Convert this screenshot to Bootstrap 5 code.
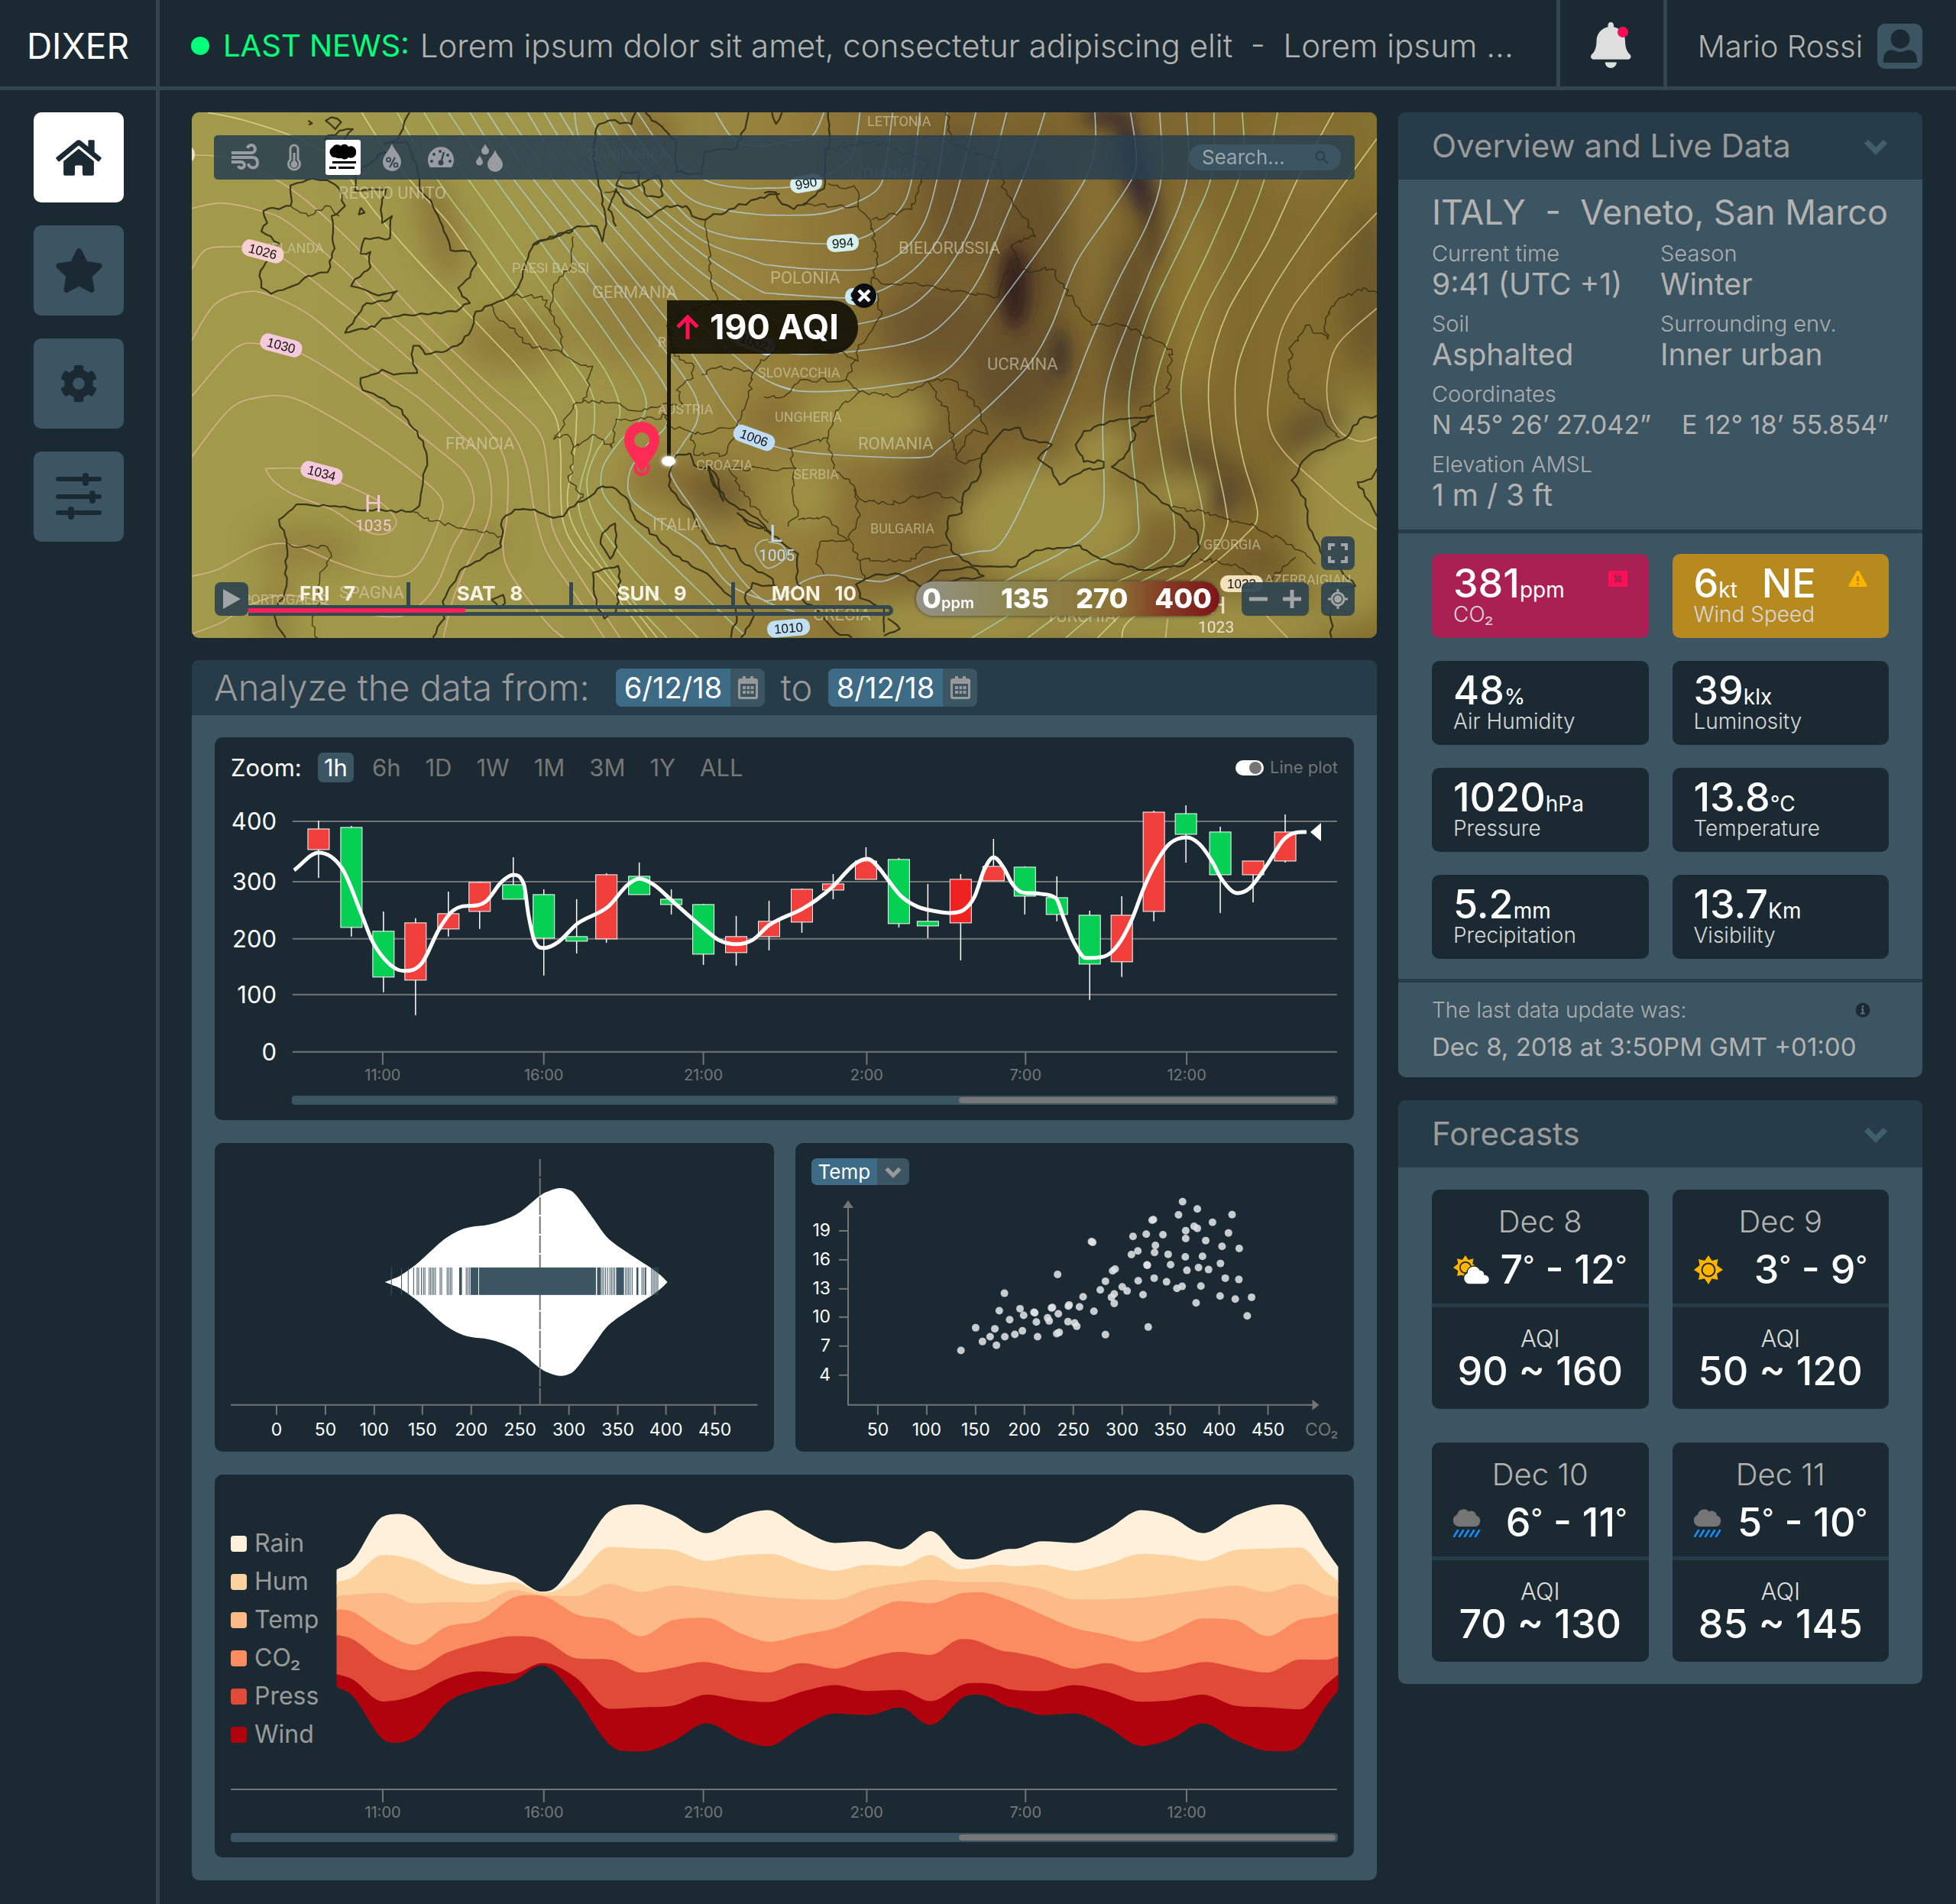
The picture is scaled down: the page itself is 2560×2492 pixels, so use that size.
<!DOCTYPE html>
<html lang="en">
<head>
<meta charset="utf-8">
<meta name="viewport" content="width=device-width, initial-scale=1">
<title>Dixer – Air quality dashboard</title>
<link href="https://cdn.jsdelivr.net/npm/bootstrap@5.3.0/dist/css/bootstrap.min.css" rel="stylesheet">
<style>
:root{--ink:#1b2a32;--panel:#3b5563;--head:#273c49;--line:#33454f;--blue:#3d6b86;--grey:#9a9a9a;--soft:#b4b2b0;--dim:#747474}
body{background:var(--ink);color:#fff;font-family:Inter,"Open Sans",sans-serif;font-size:28px;line-height:34px}
button,input,select{font-family:inherit}
a{text-decoration:none;color:inherit}
svg{display:block;overflow:visible}
/* top bar */
.topbar{height:118px;border-bottom:5px solid var(--line)}
.topbar>*{padding-top:6px}
.brand-cell{width:209px;border-right:5px solid var(--line);font-size:46px}
.news{padding-left:41px;font-size:42px;font-weight:300;color:var(--soft);min-width:0}
.news b{font-weight:400;font-size:40px;color:#05ff7b;margin:0 14px 0 18px}
.live-dot{width:24px;height:24px;border-radius:50%;background:#05ff7b;flex:none}
.bell-cell{width:145px;border:0 solid var(--line);border-width:0 5px;flex:none}
.user-cell{padding:0 44px 0 40px;font-size:40px;font-weight:300;color:var(--soft);flex:none;gap:19px}
.avatar{width:59px;height:59px;border-radius:10px;background:var(--panel)}
/* side bar */
.sidebar{width:209px;border-right:5px solid var(--line);padding:29px 0 0 44px;gap:30px;flex:none}
.side-btn{width:118px;height:118px;border-radius:10px;background:var(--panel);color:var(--ink)}
.side-btn.active{background:#fff}
main{padding:29px 44px 29px 42px;gap:28px;min-width:0}
.col-data{flex:1551 1 0;min-width:0;gap:29px}
.col-live{flex:686 1 0;min-width:0;gap:30px}
/* panels */
.panel{background:var(--panel);border-radius:10px;overflow:hidden}
.panel-head{background:var(--head);color:var(--grey);padding:0 44px;height:88px;font-size:42px;line-height:88px}
.panel-head h2{font-size:inherit;line-height:inherit;font-weight:400;margin:0}
.chev{color:#3f5f6f;border:0;background:none;padding:0}
.rule{height:5px;background:var(--head)}
.place{padding:18px 44px 22px}
.place h3{font-size:45px;line-height:50px;font-weight:400;margin:0;color:var(--soft);white-space:pre}
.fact{margin-top:12px}
.fact dt{font-size:29px;line-height:34px;font-weight:300;color:#aeaeae}
.fact dd{font-size:39px;line-height:46px;color:var(--soft);margin:0;white-space:nowrap}
.fact .geo{font-size:34px}
.tilebox{padding:27px 44px 26px}
.daybox{padding:29px 44px}
.tiles{--bs-gutter-x:31px;--bs-gutter-y:30px}
.tile{background:var(--ink);border-radius:10px;height:110px;padding:14px 28px 0}
.tile .val{font-size:52px;line-height:50px;font-weight:500}
.tile .unit{font-size:28px;line-height:20px;font-weight:400}
.tile .lbl{font-size:28px;line-height:30px;font-weight:300;color:#d8d8d8}
.tile.bad{background:#aa2052}
.tile.warn{background:#b78a20}
.updated{padding:19px 44px}
.updated .when{font-size:33px;line-height:42px;margin-top:10px;color:var(--soft);white-space:nowrap}
.days{--bs-gutter-x:31px;--bs-gutter-y:44px}
.day{background:var(--ink);border-radius:10px;text-align:center}
.day .date{font-size:40px;line-height:48px;font-weight:300;color:var(--soft);padding-top:18px}
.day .temps{font-size:52px;line-height:60px;font-weight:500;margin-top:9px;padding:0 28px 14px;white-space:nowrap}
.day .deg{font-weight:400;font-size:34px;line-height:20px;vertical-align:12px}
.day .aqi{font-size:31px;line-height:36px;font-weight:300;padding-top:23px;color:#dedede}
.day .range{font-size:52px;line-height:50px;font-weight:500;padding-bottom:24px}
/* map */
.mapbox{position:relative;aspect-ratio:1551/688;border-radius:10px;overflow:hidden;background:#9b9146}
.mapbox>svg{width:100%;height:100%}
.layers{position:absolute;left:29px;right:29px;top:30px;height:58px;border-radius:5px;background:rgba(41,64,80,.88);padding:0 18px;gap:18px}
.layer-btn{width:46px;height:46px;border:0;padding:0;border-radius:3px;background:none;color:#999da1}
.layer-btn.active{background:#fff;color:#000}
.finder{width:199px;height:34px;border-radius:17px;background:var(--panel)}
.finder input{width:150px;background:none;border:0;padding:0 0 0 17px;color:#a0a5a8;font-size:26px;line-height:34px;outline:0}
.finder input::placeholder{color:#a0a5a8;opacity:1}
.finder button{background:none;border:0;padding:0;color:#2b434f}
.mapbar{position:absolute;left:30px;right:29px;bottom:29px}
.map-btn{width:44px;height:44px;background:rgba(47,69,80,.93);border:0;border-radius:8px;padding:0;color:#a2a4a6}
.timeline{margin-right:30px}
.timeline .dayname{font-size:26px;line-height:30px;font-weight:700;color:#f5f2e6;border-right:5px solid #34494f;text-align:center;white-space:pre;flex:1 1 0}
.timeline .dayname:last-child{border-right:0}
.track{height:14px;border:5px solid #34494f;border-left:0;border-radius:0 7px 7px 0;background:none}
.track div{height:6px;margin-top:-1px;background:#f72057}
.scale{width:397px;height:45px;border-radius:23px;background:linear-gradient(90deg,#93928a,#8c8652 30%,#8b7434 65%,#843a24 82%,#7c1518);box-shadow:0 0 4px #333;padding:0 10px 0 8px;font-size:36px;line-height:45px;font-weight:800;margin-right:29px}
.scale small{font-size:20px;font-weight:600}
.flag{position:absolute;left:40.1%;top:35.8%;width:250px;height:70px;border-radius:0 34px 34px 0;background:rgba(20,17,7,.92);font-size:45px;font-weight:700;line-height:70px;padding-left:12px;gap:14px;white-space:nowrap}
.flag::before{content:"";position:absolute;left:0;top:70px;width:5px;height:139px;background:#1a170b}
.flag .spot{position:absolute;left:-7px;top:204px;width:18px;height:13px;border-radius:50%;background:#fff;box-shadow:0 0 5px #fff}
.flag button{position:absolute;right:-24px;top:-22px;width:32px;height:32px;border-radius:50%;background:#0b0d0e;border:0;padding:0}
/* analysis */
.ask{padding:0 29px;height:72px;background:var(--head);font-size:47px;font-weight:300;color:var(--grey)}
.ask-from{width:510px}
.ask-to{width:83px;text-align:center}
.datebox{width:195px;height:50px;border-radius:8px;overflow:hidden;background:var(--panel)}
.datebox input{width:150px;background:var(--blue);border:0;color:#fff;font-size:38px;line-height:50px;padding:0;text-align:center;outline:0}
.datebox button{flex:1;background:none;border:0;padding:0;color:#999}
.charts{padding:29px 30px 30px;gap:30px}
.plot{background:var(--ink);border-radius:10px;padding:20px 21px}
.zoomrow{height:39px;font-size:31px;line-height:39px}
.zoomrow .cap{width:98px}
.zoomrow button{background:none;border:0;border-radius:7px;color:#777;padding:0 8px;font-size:31px;line-height:39px}
.zoomrow button.active{background:var(--panel);color:#fff}
.switchbox{width:37px;height:20px;border-radius:10px;background:#fff;appearance:none;margin:0;position:relative}
.switchbox::after{content:"";position:absolute;right:3px;top:2px;width:16px;height:16px;border-radius:50%;background:#747474}
.plotlbl{font-size:22px;color:var(--dim)}
.scroller{height:12px;border-radius:4px;background:var(--panel);padding:2px 3px}
.scroller div{height:8px;border-radius:4px;background:#777;margin-left:auto}
.scroller.inset-y{margin-left:80px}
.pick{position:relative;width:128px;height:35px}
.pick select{width:128px;height:35px;border:0;border-radius:7px;appearance:none;color:#fff;font-size:26px;line-height:35px;padding:0 0 0 9px;background:linear-gradient(90deg,var(--blue) 86px,var(--panel) 86px)}
.pick svg{position:absolute;right:9px;top:10px;pointer-events:none}
.keys{width:138px;margin:0;padding:0;list-style:none;font-size:32px;line-height:50px;color:var(--grey);flex:none}
.keys span{display:inline-block;width:21px;height:21px;border-radius:4px;flex:none}
.keys li{gap:10px}
.bands{flex:1 1 0;min-width:0}
svg .ax{stroke:#747474;stroke-width:2;fill:none}
svg .n1{font-size:31px;fill:#fff;text-anchor:end}
svg .n2{font-size:20px;fill:#777;text-anchor:middle}
svg .n3{font-size:23px;fill:#fff;text-anchor:middle}
svg .n4{font-size:23px;fill:#fff;text-anchor:end}
svg .unitname{font-size:23px;fill:#747474;text-anchor:end}
#land text{font-family:Roboto,sans-serif;font-weight:400;fill:#d9d3b0;fill-opacity:.62}
#land .big{font-size:22px}#land .sml{font-size:18px}
#pills text{font-family:"Liberation Sans",sans-serif;font-size:17px;fill:#111;text-anchor:middle}
</style>
</head>
<body class="d-flex flex-column min-vh-100">

<svg width="0" height="0" class="position-absolute" aria-hidden="true">
  <symbol id="i-chev" viewBox="0 0 32 22"><path d="M4 5l12 12L28 5" fill="none" stroke="currentColor" stroke-width="7"/></symbol>
  <symbol id="i-cal" viewBox="0 0 26 30"><path fill="currentColor" fill-rule="evenodd" d="M6 0h4v3h6V0h4v3h3a3 3 0 0 1 3 3v21a3 3 0 0 1-3 3H3a3 3 0 0 1-3-3V6a3 3 0 0 1 3-3h3zM3 10v17h20V10zm3 3h4v4H6zm5.500 0h3.500v4h-3.500zm5 0h4v4h-4zM6 19h4v4H6zm5.500 0h3.500v4h-3.500zm5 0h4v4h-4z"/></symbol>
  <symbol id="i-rain" viewBox="0 0 37 38"><path fill="#757575" d="M8 24a8 8 0 0 1-3-15.500A8.500 8.500 0 0 1 20 4.500a6.500 6.500 0 0 1 10 5A7.500 7.500 0 0 1 29 24z"/><path d="M6 29l-5 8m12-8l-5 8m12-8l-5 8m12-8l-5 8m12-8l-5 8" stroke="#1490ff" stroke-width="2.500" stroke-linecap="round"/></symbol>
  <symbol id="i-sun" viewBox="0 0 38 38"><path fill="#ffb400" d="M19 0l4.500 7 8-2-1.500 8 8 6-8 5 1.500 8-8-1.500L19 38l-5-7.500-8 1.500 1.500-8L0 19l7.500-6L6 5l8 2z"/><circle cx="19" cy="19" r="8.500" fill="#ffb400" stroke="#1b2a32" stroke-width="2"/></symbol>
</svg>

<header class="topbar d-flex">
  <a href="#" class="brand-cell d-flex align-items-center justify-content-center flex-shrink-0">DIXER</a>
  <div class="news flex-grow-1 d-flex align-items-center text-nowrap overflow-hidden">
    <span class="live-dot"></span><b>LAST NEWS:</b><span>Lorem ipsum dolor sit amet, consectetur adipiscing elit &nbsp;-&nbsp; Lorem ipsum ...</span>
  </div>
  <button class="bell-cell bg-transparent d-flex align-items-center justify-content-center" aria-label="Notifications">
    <svg width="54" height="60" viewBox="0 0 54 60"><path fill="#dedede" transform="scale(.1172)" d="M224 512c35.320 0 63.970-28.650 63.970-64H160.030c0 35.350 28.650 64 63.970 64zm215.390-149.710c-19.320-20.760-55.470-51.990-55.470-154.290 0-77.700-54.480-139.900-127.940-155.160V32c0-17.670-14.320-32-31.980-32s-31.980 14.330-31.980 32v20.840C118.560 68.100 64.080 130.300 64.080 208c0 102.300-36.150 133.530-55.470 154.290-6 6.450-8.660 14.160-8.610 21.710.11 16.400 12.980 32 32.100 32h383.800c19.120 0 32-15.600 32.100-32 .05-7.550-2.610-15.270-8.610-21.710z"/><circle cx="42" cy="13" r="7" fill="#ff0a54"/></svg>
  </button>
  <a href="#" class="user-cell d-flex align-items-center text-nowrap pt-2">Mario Rossi
    <span class="avatar"><svg width="59" height="59" viewBox="0 0 59 59" fill="#1b2a32"><circle cx="30" cy="20" r="12.500"/><path d="M8 51c-1-12 5-18 14-16q8 4 16 0c9-2 15 4 14 16z"/></svg></span></a>
</header>

<div class="d-flex flex-grow-1">
  <nav class="sidebar d-flex flex-column" aria-label="Main">
    <a href="#" class="side-btn active d-flex align-items-center justify-content-center" aria-label="Home"><svg width="60" height="53" viewBox="0 0 576 512" fill="currentColor"><path d="M280.370 148.260L96 300.110V464a16 16 0 0 0 16 16l112.060-.29a16 16 0 0 0 15.920-16V368a16 16 0 0 1 16-16h64a16 16 0 0 1 16 16v95.640a16 16 0 0 0 16 16.050L464 480a16 16 0 0 0 16-16V300L295.670 148.260a12.190 12.190 0 0 0-15.300 0zM571.600 251.470L488 182.560V44.050a12 12 0 0 0-12-12h-56a12 12 0 0 0-12 12v72.610L318.470 43a48 48 0 0 0-61 0L4.340 251.470a12 12 0 0 0-1.600 16.900l25.500 31A12 12 0 0 0 45.150 301l235.220-193.740a12.190 12.190 0 0 1 15.300 0L530.900 301a12 12 0 0 0 16.900-1.600l25.500-31a12 12 0 0 0-1.700-16.930z"/></svg></a>
    <a href="#" class="side-btn d-flex align-items-center justify-content-center" aria-label="Favourites"><svg width="65" height="58" viewBox="0 0 576 512" fill="currentColor"><path d="M259.300 17.800L194 150.200 47.900 171.500c-26.200 3.800-36.700 36.100-17.700 54.600l105.700 103-25 145.500c-4.500 26.300 23.200 46 46.400 33.700L288 439.600l130.700 68.700c23.200 12.200 50.900-7.400 46.400-33.700l-25-145.500 105.700-103c19-18.500 8.500-50.800-17.700-54.600L382 150.200 316.700 17.800c-11.700-23.600-45.600-23.900-57.400 0z"/></svg></a>
    <a href="#" class="side-btn d-flex align-items-center justify-content-center" aria-label="Settings"><svg width="50" height="50" viewBox="0 0 512 512" fill="currentColor"><path d="M487.400 315.700l-42.600-24.600c4.300-23.200 4.300-47 0-70.200l42.600-24.600c4.900-2.800 7.100-8.600 5.500-14-11.100-35.600-30-67.800-54.700-94.600-3.800-4.100-10-5.100-14.800-2.300L380.800 110c-17.900-15.400-38.500-27.300-60.800-35.100V25.800c0-5.600-3.900-10.500-9.400-11.700-36.700-8.200-74.300-7.800-109.200 0-5.500 1.200-9.400 6.100-9.400 11.700V75c-22.200 7.900-42.800 19.800-60.800 35.100L88.700 85.500c-4.900-2.800-11-1.900-14.800 2.300-24.700 26.700-43.600 58.900-54.700 94.600-1.700 5.400.6 11.200 5.500 14L67.300 221c-4.300 23.200-4.300 47 0 70.200l-42.600 24.600c-4.900 2.800-7.100 8.600-5.500 14 11.100 35.600 30 67.800 54.700 94.600 3.800 4.100 10 5.100 14.800 2.300l42.600-24.600c17.900 15.400 38.500 27.300 60.800 35.100v49.200c0 5.600 3.900 10.500 9.400 11.700 36.700 8.200 74.300 7.800 109.200 0 5.500-1.200 9.400-6.100 9.400-11.700v-49.200c22.200-7.900 42.800-19.800 60.800-35.100l42.600 24.600c4.900 2.800 11 1.900 14.800-2.300 24.700-26.700 43.600-58.900 54.700-94.600 1.500-5.500-.7-11.300-5.600-14.100zM256 336c-44.100 0-80-35.900-80-80s35.900-80 80-80 80 35.900 80 80-35.900 80-80 80z"/></svg></a>
    <a href="#" class="side-btn d-flex align-items-center justify-content-center" aria-label="Filters"><svg width="60" height="60" viewBox="0 0 60 60" stroke="currentColor" stroke-linecap="round"><path d="M3 7h54M3 30h54M3 51h54" stroke-width="6"/><path d="M39 3v9M48 26v9M20 47v9" stroke-width="8"/></svg></a>
  </nav>

  <main class="d-flex flex-grow-1 align-items-start">
    <div class="col-data d-flex flex-column">

      <section class="mapbox" aria-label="Air quality map">
        <svg viewBox="0 0 1551 688" preserveAspectRatio="xMidYMid slice">
          <defs>
            <linearGradient id="gb"><stop offset="0" stop-color="#a29a4b"/><stop offset=".33" stop-color="#9f954a"/><stop offset=".5" stop-color="#957f3b"/><stop offset=".62" stop-color="#7c6530"/><stop offset=".8" stop-color="#7d662f"/><stop offset="1" stop-color="#84702f"/></linearGradient>
            <filter id="bl" x="-100%" y="-100%" width="300%" height="300%"><feGaussianBlur stdDeviation="18"/></filter>
            <filter id="bs" x="-100%" y="-100%" width="300%" height="300%"><feGaussianBlur stdDeviation="11"/></filter>
          </defs>
          <rect width="1551" height="688" fill="url(#gb)"/>
          <g filter="url(#bl)">
            <g fill="#7b5f2b" opacity=".62"><ellipse cx="325" cy="150" rx="22" ry="75" transform="rotate(-15 325 150)"/><ellipse cx="420" cy="300" rx="70" ry="40" opacity=".7"/><ellipse cx="560" cy="260" rx="70" ry="70" opacity=".5"/><ellipse cx="150" cy="570" rx="70" ry="30" opacity=".6"/><ellipse cx="110" cy="660" rx="25" ry="60" opacity=".6"/><ellipse cx="780" cy="400" rx="60" ry="22"/><ellipse cx="630" cy="480" rx="60" ry="26"/><ellipse cx="600" cy="20" rx="40" ry="30"/><ellipse cx="390" cy="560" rx="20" ry="20" opacity=".6"/></g>
            <ellipse cx="690" cy="500" rx="40" ry="35" fill="#5a4526" opacity=".6"/>
            <g fill="#9c9045"><ellipse cx="880" cy="400" rx="90" ry="50"/><ellipse cx="800" cy="500" rx="40" ry="50"/><ellipse cx="700" cy="130" rx="40" ry="30" opacity=".5"/><ellipse cx="1120" cy="540" rx="120" ry="80"/><ellipse cx="1190" cy="440" rx="40" ry="30"/><ellipse cx="1520" cy="520" rx="70" ry="150"/><ellipse cx="1290" cy="500" rx="60" ry="20"/><ellipse cx="1000" cy="670" rx="140" ry="40"/><ellipse cx="1300" cy="670" rx="200" ry="40"/></g>
            <g fill="#4f3d26" opacity=".75"><ellipse cx="1005" cy="110" rx="40" ry="90" opacity=".5"/><ellipse cx="980" cy="280" rx="80" ry="50" opacity=".5"/><ellipse cx="1100" cy="170" rx="50" ry="130" opacity=".6"/><ellipse cx="1080" cy="350" rx="60" ry="60" opacity=".7"/><ellipse cx="1225" cy="280" rx="28" ry="110" opacity=".85"/><ellipse cx="1540" cy="230" rx="35" ry="110" opacity=".6"/><ellipse cx="1340" cy="470" rx="70" ry="20" transform="rotate(35 1340 470)"/><ellipse cx="1470" cy="415" rx="50" ry="22" transform="rotate(-25 1470 415)"/><ellipse cx="980" cy="480" rx="50" ry="40" opacity=".5"/><ellipse cx="1400" cy="590" rx="40" ry="20" opacity=".5"/></g>
            <g fill="#8f7935"><ellipse cx="1180" cy="150" rx="22" ry="110" opacity=".6"/><ellipse cx="1310" cy="240" rx="35" ry="130" opacity=".9"/><ellipse cx="1450" cy="60" rx="50" ry="50" opacity=".5"/></g>
          </g>
          <g filter="url(#bs)"><ellipse cx="1200" cy="6" rx="36" ry="14" fill="#33242a" opacity=".8"/><ellipse cx="1235" cy="75" rx="18" ry="66" fill="#2b2232" opacity=".85" transform="rotate(-14 1235 75)"/><ellipse cx="1256" cy="150" rx="15" ry="56" fill="#453224" opacity=".6"/><ellipse cx="1077" cy="230" rx="20" ry="56" fill="#311a20" opacity=".95"/><ellipse cx="1137" cy="315" rx="12" ry="36" fill="#2c2027" opacity=".75"/><ellipse cx="1350" cy="506" rx="14" ry="26" fill="#503c2a" opacity=".8"/></g>
          <g id="isobars" fill="none" stroke-width="1.600" opacity=".85"></g>
          <g id="coast" fill="none" stroke="#2c2a14" stroke-width="2.200" stroke-linejoin="round" opacity=".88"></g>
          <g id="border" fill="none" stroke="#33290f" stroke-width="1.400" opacity=".8"></g>
          <g id="land">
            <text class="big" x="192" y="113">REGNO UNITO</text><text class="sml" x="99" y="184">IRLANDA</text><text class="sml" x="419" y="210">PAESI BASSI</text><text class="big" x="524" y="243">GERMANIA</text><text class="big" x="332" y="441">FRANCIA</text><text class="sml" x="610" y="395">AUSTRIA</text><text class="sml" x="660" y="468">CROAZIA</text><text class="big" x="603" y="547">ITALIA</text><text class="big" x="193" y="636">SPAGNA</text><text class="sml" x="66" y="644">PORTOGALLO</text><text class="sml" x="610" y="307">REPUBBLICA CECA</text><text class="sml" x="520" y="61">DANIMARCA</text><text class="sml" x="884" y="18">LETTONIA</text><text class="sml" x="862" y="86">LITUANIA</text><text class="big" x="757" y="224">POLONIA</text><text class="big" x="925" y="185">BIELORUSSIA</text><text class="big" x="1041" y="337">UCRAINA</text><text class="sml" x="741" y="347">SLOVACCHIA</text><text class="sml" x="763" y="405">UNGHERIA</text><text class="big" x="872" y="441">ROMANIA</text><text class="sml" x="787" y="480">SERBIA</text><text class="sml" x="888" y="551">BULGARIA</text><text class="sml" x="1324" y="572">GEORGIA</text><text class="sml" x="1404" y="618">AZERBAIGIAN</text><text class="big" x="813" y="665">GRECIA</text><text class="big" x="1118" y="667">TURCHIA</text>
            <g style="font-size:21px"><text x="226" y="523" style="font-size:32px;fill:#f2c7da;fill-opacity:1">H</text><text x="214" y="548" style="fill:#f2c7da;fill-opacity:1">1035</text><text x="756" y="562" style="font-size:32px;fill:#c0dcf5;fill-opacity:1">L</text><text x="742" y="587" style="fill:#c0dcf5;fill-opacity:1">1005</text><text x="1317" y="681" style="fill:#f0e0d0;fill-opacity:1">1023</text><text x="1331" y="656" style="font-size:32px;fill:#f0e0d0;fill-opacity:1">H</text></g>
          </g>
          <g id="pills"></g>
          <path fill="#fe2c55" fill-rule="evenodd" d="M589 405a23 23 0 0 1 23 24c0 14-13 27-23 42-10-15-23-28-23-42a23 23 0 0 1 23-24zm0 14a10 10 0 1 0 0 20 10 10 0 0 0 0-20z"/>
          <path fill="none" stroke="#fe2c55" stroke-width="4" d="M581 461c-2 7 2 13 8 13s10-6 8-13"/>
        </svg>

        <div class="layers d-flex align-items-center">
          <button class="layer-btn" aria-label="Wind"><svg class="m-auto" width="36" height="34" viewBox="0 0 36 34" fill="none" stroke="currentColor" stroke-width="4"><path d="M0 11h26a5 5 0 1 0-5-6M0 17h27q7 0 7 7a6 6 0 0 1-12 1M0 23h13a4 4 0 1 1-4 5"/></svg></button>
          <button class="layer-btn" aria-label="Temperature"><svg class="m-auto" width="18" height="36" viewBox="0 0 18 36"><path d="M9 2a5 5 0 0 1 5 5v14a7.500 7.500 0 1 1-10 0V7a5 5 0 0 1 5-5z" fill="none" stroke="currentColor" stroke-width="3"/><path d="M9 12v14" stroke="currentColor" stroke-width="3"/><circle cx="9" cy="27" r="4.500" fill="currentColor"/></svg></button>
          <button class="layer-btn active" aria-label="Air quality"><svg class="m-auto" width="36" height="34" viewBox="0 0 36 34" fill="currentColor"><path d="M8 17a7 7 0 0 1-4-13 7 7 0 0 1 11-2 6 6 0 0 1 10 1 7 7 0 0 1 10 7 7 7 0 0 1-10 7 6 6 0 0 1-9 1q-4 1-8-1zM4 22h31v3H4zM0 29h9v3H0zm12 0h21v3H12z"/></svg></button>
          <button class="layer-btn" aria-label="Humidity"><svg class="m-auto" width="26" height="36" viewBox="0 0 26 36"><path fill="currentColor" d="M13 0c3 9 12 15 12 24a12 12 0 0 1-24 0C1 15 10 9 13 0z"/><path d="M17 18l-7 13" stroke="#2f4551" stroke-width="2"/><g fill="none" stroke="#2f4551" stroke-width="1.800"><circle cx="8.500" cy="21" r="2.600"/><circle cx="18" cy="28" r="2.600"/></g></svg></button>
          <button class="layer-btn" aria-label="Pressure"><svg class="m-auto" width="36" height="28" viewBox="0 0 36 28"><path fill="currentColor" d="M4 27a17 17 0 1 1 28 0z"/><g fill="#2f4551"><circle cx="6" cy="19" r="2"/><circle cx="9" cy="10" r="2"/><circle cx="17" cy="6" r="2"/><circle cx="27" cy="11" r="2"/><circle cx="30" cy="19" r="2"/><circle cx="18" cy="21" r="3.500"/></g><path d="M18 21l4-14" stroke="#2f4551" stroke-width="2.500"/></svg></button>
          <button class="layer-btn" aria-label="Rain"><svg class="m-auto" width="36" height="36" viewBox="0 0 36 36" fill="currentColor"><path d="M25 8c2 8 10 12 10 19a9.500 9.500 0 0 1-20 0C15 20 23 16 25 8zM12 0c1 4 5 6 5 9.500a5 5 0 0 1-10 0C7 6 11 4 12 0zM5 15c1 4 4 6 4 9a4.500 4.500 0 0 1-9 0c0-3 4-5 5-9z"/></svg></button>
          <form class="finder d-flex align-items-center ms-auto"><input type="text" placeholder="Search..." aria-label="Search"><button type="button" class="ms-auto me-3" aria-label="Find"><svg width="18" height="18" viewBox="0 0 18 18" fill="none" stroke="currentColor" stroke-width="2.500"><circle cx="7" cy="7" r="5.500"/><path d="M11 11l6 6"/></svg></button></form>
        </div>

        <div class="flag d-flex align-items-center">
          <svg width="30" height="34" viewBox="0 0 30 34" fill="none" stroke="#ff0f55" stroke-width="5"><path d="M15 33V4M2 17L15 4l13 13"/></svg>190 AQI
          <span class="spot"></span>
          <button aria-label="Close"><svg class="m-auto" width="18" height="18" viewBox="0 0 18 18" stroke="#fff" stroke-width="4.500"><path d="M2 2l14 14M16 2L2 16"/></svg></button>
        </div>

        <div class="mapbar d-flex align-items-end">
          <button class="map-btn" aria-label="Play"><svg class="m-auto" width="24" height="26" viewBox="0 0 24 26" fill="currentColor"><path d="M1 0l23 13L1 26z"/></svg></button>
          <div class="timeline flex-grow-1">
            <div class="d-flex"><div class="dayname">FRI   7</div><div class="dayname">SAT   8</div><div class="dayname">SUN   9</div><div class="dayname">MON   10</div></div>
            <div class="track"><div style="width:33.8%"></div></div>
          </div>
          <div class="scale d-flex justify-content-between"><span>0<small>ppm</small></span><span>135</span><span>270</span><span>400</span></div>
          <div class="d-flex me-3">
            <button class="map-btn rounded-end-0" aria-label="Zoom out"><svg class="m-auto" width="24" height="24" stroke="currentColor" stroke-width="5"><path d="M0 12h24"/></svg></button>
            <button class="map-btn rounded-start-0" aria-label="Zoom in"><svg class="m-auto" width="24" height="24" stroke="currentColor" stroke-width="5"><path d="M0 12h24M12 0v24"/></svg></button>
          </div>
          <div class="d-flex flex-column gap-3">
            <button class="map-btn" aria-label="Full screen"><svg class="m-auto" width="26" height="26" viewBox="0 0 26 26" fill="none" stroke="currentColor" stroke-width="4"><path d="M2 9V2h7M17 2h7v7M24 17v7h-7M9 24H2v-7"/></svg></button>
            <button class="map-btn" aria-label="Locate"><svg class="m-auto" width="26" height="26" viewBox="0 0 26 26" fill="none" stroke="currentColor" stroke-width="3"><circle cx="13" cy="13" r="8"/><circle cx="13" cy="13" r="3.500" fill="currentColor"/><path d="M13 0v5M13 21v5M0 13h5M21 13h5"/></svg></button>
          </div>
        </div>
      </section>

      <section class="panel">
        <div class="ask d-flex align-items-center text-nowrap">
          <label for="from" class="ask-from me-3">Analyze the data from:</label>
          <div class="datebox d-flex"><input id="from" type="text" value="6/12/18"><button aria-label="Pick start date"><svg class="m-auto" width="26" height="30"><use href="#i-cal"/></svg></button></div>
          <label for="until" class="ask-to">to</label>
          <div class="datebox d-flex"><input id="until" type="text" value="8/12/18"><button aria-label="Pick end date"><svg class="m-auto" width="26" height="30"><use href="#i-cal"/></svg></button></div>
        </div>
        <div class="charts d-flex flex-column">
          <article class="plot">
            <div class="zoomrow d-flex align-items-center">
              <span class="cap me-3">Zoom:</span>
              <div class="d-flex gap-3"><button class="active">1h</button><button>6h</button><button>1D</button><button>1W</button><button>1M</button><button>3M</button><button>1Y</button><button>ALL</button></div>
              <input class="switchbox ms-auto" type="checkbox" role="switch" id="lp" checked><label for="lp" class="plotlbl ms-2">Line plot</label>
            </div>
            <svg id="candles" class="w-100" viewBox="301 1024 1450 394"></svg>
            <div class="scroller inset-y mt-3"><div style="width:36.2%"></div></div>
          </article>
          <div class="row" style="--bs-gutter-x:28px">
            <div class="col-6"><article class="plot h-100"><svg id="violin" class="w-100" viewBox="301 1516 690 365"></svg></article></div>
            <div class="col-6"><article class="plot h-100">
              <div class="pick"><select aria-label="Vertical axis"><option>Temp</option></select><svg width="24" height="16" color="#999"><use href="#i-chev"/></svg></div>
              <svg id="scatter" class="w-100" viewBox="1061 1551 690 330"></svg></article></div>
          </div>
          <article class="plot">
            <div class="d-flex align-items-center">
              <ul class="keys">
                <li class="d-flex align-items-center"><span style="background:#fff0db"></span>Rain</li><li class="d-flex align-items-center"><span style="background:#fcd39f"></span>Hum</li><li class="d-flex align-items-center"><span style="background:#fcba88"></span>Temp</li><li class="d-flex align-items-center"><span style="background:#fa8c60"></span>CO₂</li><li class="d-flex align-items-center"><span style="background:#e04b38"></span>Press</li><li class="d-flex align-items-center"><span style="background:#b0030d"></span>Wind</li>
              </ul>
              <div class="bands"><svg id="stream" class="w-100" viewBox="439 1951 1312 390"></svg></div>
            </div>
            <svg id="streamaxis" class="w-100" viewBox="301 2341 1450 51"></svg>
            <div class="scroller mt-2"><div style="width:34.2%"></div></div>
          </article>
        </div>
      </section>
    </div>

    <div class="col-live d-flex flex-column">
      <section class="panel">
        <div class="panel-head d-flex justify-content-between align-items-center"><h2>Overview and Live Data</h2><button class="chev" aria-label="Collapse"><svg width="34" height="23"><use href="#i-chev"/></svg></button></div>
        <div class="place">
          <h3>ITALY  -  Veneto, San Marco</h3>
          <dl class="m-0">
            <div class="row g-0"><div class="fact col-6"><dt>Current time</dt><dd>9:41 (UTC +1)</dd></div><div class="fact col-6"><dt>Season</dt><dd>Winter</dd></div>
            <div class="fact col-6"><dt>Soil</dt><dd>Asphalted</dd></div><div class="fact col-6"><dt>Surrounding env.</dt><dd>Inner urban</dd></div></div>
            <div class="fact"><dt>Coordinates</dt><dd class="geo d-flex justify-content-between"><span>N 45° 26’ 27.042”</span><span>E 12° 18’ 55.854”</span></dd></div>
            <div class="fact"><dt>Elevation AMSL</dt><dd>1 m / 3 ft</dd></div>
          </dl>
        </div>
        <div class="rule"></div>
        <div class="tilebox">
          <div class="row tiles mt-0">
            <div class="col-6 mt-0"><div class="tile bad"><div class="d-flex"><div class="val">381<span class="unit">ppm</span></div><svg class="ms-auto mt-2" width="25" height="21" viewBox="0 0 25 21"><rect width="25" height="21" rx="2" fill="#ff0f55"/><path d="M8 6l9 9M17 6l-9 9" stroke="#aa2052" stroke-width="4"/></svg></div><div class="lbl">CO₂</div></div></div>
            <div class="col-6 mt-0"><div class="tile warn"><div class="d-flex"><div class="val">6<span class="unit">kt</span></div><div class="val ms-4 ps-2">NE</div><svg class="ms-auto mt-2" width="25" height="21" viewBox="0 0 25 21"><path d="M12.500 0q1.500 0 2 1l10 18q.5 2-1.500 2H2q-2 0-1.500-2l10-18q.5-1 2-1z" fill="#ffb400"/><path d="M12.500 7v7M12.500 16v2.500" stroke="#b78a20" stroke-width="3"/></svg></div><div class="lbl">Wind Speed</div></div></div>
            <div class="col-6"><div class="tile"><div class="val">48<span class="unit">%</span></div><div class="lbl">Air Humidity</div></div></div>
            <div class="col-6"><div class="tile"><div class="val">39<span class="unit">klx</span></div><div class="lbl">Luminosity</div></div></div>
            <div class="col-6"><div class="tile"><div class="val">1020<span class="unit">hPa</span></div><div class="lbl">Pressure</div></div></div>
            <div class="col-6"><div class="tile"><div class="val">13.8<span class="unit">°C</span></div><div class="lbl">Temperature</div></div></div>
            <div class="col-6"><div class="tile"><div class="val">5.2<span class="unit">mm</span></div><div class="lbl">Precipitation</div></div></div>
            <div class="col-6"><div class="tile"><div class="val">13.7<span class="unit">Km</span></div><div class="lbl">Visibility</div></div></div>
          </div>
        </div>
        <div class="rule"></div>
        <div class="updated">
          <div class="d-flex justify-content-between align-items-center fw-light" style="color:#aeaeae">The last data update was:<svg class="me-4" width="20" height="20"><circle cx="10" cy="10" r="9.500" fill="#1b2a32"/><path d="M10 4v3M8 9h2v5M7 14.500h6" stroke="#56707e" stroke-width="2.200" fill="none"/></svg></div>
          <div class="when">Dec 8, 2018 at 3:50PM GMT +01:00</div>
        </div>
      </section>

      <section class="panel">
        <div class="panel-head d-flex justify-content-between align-items-center"><h2>Forecasts</h2><button class="chev" aria-label="Collapse"><svg width="34" height="23"><use href="#i-chev"/></svg></button></div>
        <div class="daybox">
          <div class="row days mt-0">
            <div class="col-6 mt-0"><div class="day"><div class="date">Dec 8</div><div class="temps d-flex justify-content-between align-items-center"><svg width="47" height="38" viewBox="0 0 47 38"><use href="#i-sun" width="32" height="32"/><path d="M20 38a8 8 0 0 1-2-15 9 9 0 0 1 17-4 6 6 0 0 1 6 6 6.500 6.500 0 0 1 0 13z" fill="#fff" stroke="#1b2a32" stroke-width="1.500"/></svg><span>7<span class="deg">°</span> - 12<span class="deg">°</span></span></div><div class="rule"></div><div class="aqi">AQI</div><div class="range">90 ~ 160</div></div></div>
            <div class="col-6 mt-0"><div class="day"><div class="date">Dec 9</div><div class="temps d-flex justify-content-between align-items-center"><svg width="38" height="38"><use href="#i-sun"/></svg><span>3<span class="deg">°</span> - 9<span class="deg">°</span></span></div><div class="rule"></div><div class="aqi">AQI</div><div class="range">50 ~ 120</div></div></div>
            <div class="col-6"><div class="day"><div class="date">Dec 10</div><div class="temps d-flex justify-content-between align-items-center"><svg width="37" height="38"><use href="#i-rain"/></svg><span>6<span class="deg">°</span> - 11<span class="deg">°</span></span></div><div class="rule"></div><div class="aqi">AQI</div><div class="range">70 ~ 130</div></div></div>
            <div class="col-6"><div class="day"><div class="date">Dec 11</div><div class="temps d-flex justify-content-between align-items-center"><svg width="37" height="38"><use href="#i-rain"/></svg><span>5<span class="deg">°</span> - 10<span class="deg">°</span></span></div><div class="rule"></div><div class="aqi">AQI</div><div class="range">85 ~ 145</div></div></div>
          </div>
        </div>
      </section>
    </div>
  </main>
</div>

<script src="https://cdn.jsdelivr.net/npm/bootstrap@5.3.0/dist/js/bootstrap.bundle.min.js"></script>
<script>
const $=id=>document.getElementById(id);
const pairs=s=>s.trim().split(/\s+/).map(p=>p.split(',').map(Number));
const f=n=>n.toFixed(1);
// free smooth curve through a list of points
function curve(p,t=6,start='M'){
  let d=start+f(p[0][0])+' '+f(p[0][1]);
  for(let i=0;i<p.length-1;i++){
    const a=p[i-1]||p[i],b=p[i],c=p[i+1],e=p[i+2]||c;
    d+='C'+[b[0]+(c[0]-a[0])/t,b[1]+(c[1]-a[1])/t,c[0]-(e[0]-b[0])/t,c[1]-(e[1]-b[1])/t,c[0],c[1]].map(f).join(' ');
  }
  return d;
}
// monotone curve for series: flat at peaks, no overshoot
function series(p,start='M'){
  const n=p.length,s=[],m=[];
  for(let i=0;i<n-1;i++)s.push((p[i+1][1]-p[i][1])/(p[i+1][0]-p[i][0]));
  for(let i=0;i<n;i++){
    if(!i)m.push(s[0]);else if(i===n-1)m.push(s[n-2]);
    else{const a=s[i-1],b=s[i];m.push(a*b<=0?0:Math.sign(a)*Math.min(Math.abs(a+b)/2,3*Math.abs(a),3*Math.abs(b)))}
  }
  let d=start+f(p[0][0])+' '+f(p[0][1]);
  for(let i=0;i<n-1;i++){const h=(p[i+1][0]-p[i][0])/3;d+='C'+[p[i][0]+h,p[i][1]+m[i]*h,p[i+1][0]-h,p[i+1][1]-m[i+1]*h,...p[i+1]].map(f).join(' ')}
  return d;
}

/* candlestick chart */
const hours=[[500,'11:00'],[711,'16:00'],[920,'21:00'],[1134,'2:00'],[1342,'7:00'],[1553,'12:00']];
let s='';
[[1075,400],[1154,300],[1229,200],[1302,100],[1377,0]].forEach(([y,n])=>s+=`<path class="ax" d="M382 ${y}H1750"/><text class="n1" x="361" y="${y+11}">${n}</text>`);
hours.forEach(([x,n])=>s+=`<path class="ax" d="M${x} 1377v17"/><text class="n2" x="${x}" y="1414">${n}</text>`);
const C=[[416,1085,1112,1074,1149,0],[459,1083,1214,1081,1226,1],[501,1219,1279,1193,1299,1],[543,1208,1283,1202,1329,0],[586,1196,1216,1167,1226,0],[627,1155,1193,1154,1216,0],[671,1158,1177,1122,1177,1],[711,1171,1228,1164,1277,1],[754,1226,1232,1177,1248,1],[793,1145,1229,1143,1234,0],[836,1147,1171,1129,1171,1],[878,1177,1184,1164,1197,1],[920,1184,1249,1183,1263,1],[963,1226,1247,1199,1264,0],[1006,1206,1226,1179,1244,0],[1049,1164,1207,1163,1221,0],[1090,1157,1165,1144,1177,0],[1133,1127,1151,1109,1151,0],[1176,1125,1209,1123,1214,1],[1214,1206,1212,1157,1228,1],[1257,1151,1208,1144,1257,2],[1300,1134,1153,1098,1153,0],[1341,1135,1173,1134,1197,1],[1383,1175,1197,1147,1206,1],[1426,1198,1262,1192,1309,1],[1468,1198,1259,1173,1279,0],[1510,1063,1193,1061,1206,0],[1552,1065,1092,1054,1129,1],[1597,1089,1145,1082,1195,1],[1640,1127,1145,1127,1181,0],[1682,1089,1127,1066,1129,0]];
C.forEach(([x,a,b,h,l,k])=>s+=`<path d="M${x} ${h}V${l}" stroke="#fff" stroke-width="1.500"/><rect x="${x-14}" y="${a}" width="28" height="${b-a}" fill="${['#f13f3c','#05d054','#ef2222'][k]}" stroke="#fff"/>`);
const L=pairs('384,1139 416,1116 447,1137 472,1196 487,1233 510,1263 528,1271 551,1261 574,1216 592,1192 635,1180 656,1154 671,1145 685,1158 691,1198 699,1232 711,1241 730,1233 755,1209 795,1187 821,1158 836,1150 855,1158 880,1180 920,1215 941,1231 963,1236 985,1230 1006,1211 1049,1190 1068,1178 1090,1160 1118,1131 1135,1124 1149,1135 1162,1152 1180,1174 1201,1187 1220,1192 1243,1195 1261,1191 1275,1174 1288,1138 1300,1122 1314,1137 1324,1156 1337,1168 1361,1170 1382,1176 1392,1202 1405,1233 1421,1254 1445,1252 1463,1237 1481,1204 1497,1162 1513,1129 1531,1104 1553,1096 1570,1105 1586,1127 1599,1151 1619,1169 1635,1163 1659,1131 1680,1099 1695,1090 1710,1089');
s+=`<path d="${series(L)}" fill="none" stroke="#fff" stroke-width="5"/><path d="M1715 1089l14-12v24z" fill="#fff"/>`;
$('candles').innerHTML=s;

/* violin chart */
const V=pairs('503,1678 513,1674 524,1669 546,1653 577,1625 597,1612 615,1606 638,1603 658,1597 679,1587 706,1565 720,1558 732,1555 743,1557 753,1564 776,1595 791,1616 804,1628 829,1645 852,1660 865,1670 873,1678');
s=`<path fill="#fff" d="${curve(V)}${curve(V.map(([x,y])=>[x,3356-y]).reverse(),6,'L')}Z"/><path class="ax" d="M706 1517V1838" stroke-dasharray="23 2"/><path class="ax" d="M301 1839H991"/>`;
const bx=v=>240+v/1.96, bar=(a,b)=>s+=`<rect x="${f(bx(a))}" y="1659" width="${f((b-a)/1.96)}" height="36" fill="#3b5563"/>`;
[532,558,575,589,598,602,609,614,618,629,633,637,641,645,657,661,675,679,683,687,724,728,732,1073,1077,1082,1087,1093,1097,1101,1105,1133,1137,1141,1145,1150,1175,1179,1200,1204,1208,1212,1216].forEach(v=>bar(v-1,v+1));
[[706,713],[735,755],[757,1057],[1060,1070],[1109,1129],[1161,1166],[1182,1186]].forEach(([a,b])=>bar(a,b));
for(let i=0;i<10;i++){const x=361+Math.round(i*63.8);s+=`<path class="ax" d="M${x} 1839v13"/><text class="n3" x="${x}" y="1879">${i*50}</text>`}
$('violin').innerHTML=s;

/* scatter chart */
s='<path class="ax" d="M1109 1580V1839H1718"/><path fill="#747474" d="M1109 1571l7 10h-14zM1726 1839l-9-7v14z"/><text class="unitname" x="1751" y="1879">CO₂</text>';
[[1611,19],[1649,16],[1687,13],[1724,10],[1762,7],[1800,4]].forEach(([y,n])=>s+=`<path class="ax" d="M1097 ${y}h12"/><text class="n4" x="1086" y="${y+7}">${n}</text>`);
for(let i=0;i<9;i++){const x=1148+Math.round(i*63.9);s+=`<path class="ax" d="M${x} 1839v13"/><text class="n3" x="${x}" y="1879">${i*50+50}</text>`}
pairs('491,893 528,804 545,858 564,839 580,873 576,808 587,737 600,668 601,839 613,772 626,830 639,729 648,755 645,816 674,743 676,745 680,781 683,839 708,765 712,777 718,726 720,724 735,749 731,827 737,822 733,594 759,780 760,719 762,714 776,785 781,798 788,722 797,682 824,739 853,831 853,621 840,655 818,465 821,468 868,684 875,671 875,708 871,580 877,573 895,643 907,659 918,516 934,502 922,445 955,436 957,557 958,558 947,674 935,619 960,801 975,609 976,508 978,480 970,381 973,379 997,438 1010,515 1016,556 1006,623 1032,649 1045,641 1053,525 1057,578 1054,453 1054,422 1036,360 1046,308 1083,337 1075,405 1083,413 1104,461 1096,523 1086,567 1111,575 1092,640 1080,706 1121,389 1170,359 1161,431 1145,484 1141,551 1188,492 1153,609 1187,614 1140,679 1178,691 1219,684 1208,757').forEach(([x,y])=>s+=`<circle cx="${f(1000+x*.523)}" cy="${f(1470+y/3)}" r="5" fill="#dfe3e5" fill-opacity=".88"/>`);
$('scatter').innerHTML=s;

/* stream chart */
const B=['198,392 218,362 258,205 280,195 302,218 342,342 385,387 428,415 465,469 478,463 510,355 553,185 590,162 635,200 679,263 722,205 758,182 803,250 846,298 888,292 930,320 970,256 1010,352 1025,356 1068,320 1082,318 1115,292 1157,298 1200,250 1244,182 1282,205 1324,263 1370,198 1420,162 1450,182 1485,325 1500,382',
'198,436 218,420 258,340 300,360 342,418 385,445 428,436 465,472 478,470 510,418 553,312 592,317 635,322 679,361 722,342 762,336 803,372 846,396 888,375 930,380 970,340 1010,391 1055,374 1082,380 1115,375 1157,396 1200,372 1244,336 1282,342 1324,361 1366,323 1410,317 1450,313 1485,400 1500,432',
'198,484 258,474 300,511 342,506 385,507 428,464 465,482 510,485 553,442 594,471 635,448 679,462 722,478 762,490 803,496 846,498 888,460 930,441 970,427 1010,436 1060,436 1082,445 1115,460 1157,497 1200,496 1244,490 1282,478 1324,462 1366,448 1408,471 1450,442 1485,482 1500,488',
'198,531 218,540 258,610 300,657 342,592 385,570 428,490 450,482 470,488 510,550 553,570 594,627 635,570 679,562 722,615 762,646 803,622 846,598 888,545 930,503 970,511 1013,474 1035,472 1060,488 1080,508 1115,550 1157,598 1200,622 1240,646 1282,612 1324,564 1366,570 1408,627 1450,569 1485,556 1500,543',
'198,622 218,636 258,715 298,747 342,684 385,650 428,627 450,628 470,643 510,705 553,709 594,755 635,738 675,718 722,745 758,755 803,722 846,741 888,705 930,682 970,693 1010,637 1022,638 1062,677 1080,684 1115,705 1157,741 1200,722 1244,755 1282,745 1328,718 1366,737 1408,755 1450,709 1485,710 1500,697',
'198,760 218,778 258,857 300,835 342,777 385,751 428,759 465,722 478,726 510,775 553,883 594,878 635,872 679,833 722,852 758,859 803,822 846,799 888,820 930,816 970,856 1015,795 1030,792 1055,798 1072,814 1115,820 1157,799 1200,822 1244,858 1282,853 1324,833 1366,872 1410,878 1450,885 1485,795 1500,762',
'198,806 218,835 258,990 275,1003 302,978 342,860 385,812 428,785 465,729 478,745 510,845 553,1010 575,1033 597,1033 635,998 679,934 722,990 758,1015 803,947 846,900 888,905 930,878 970,940 1013,842 1030,833 1045,840 1070,875 1082,880 1115,905 1157,900 1200,947 1244,1014 1282,990 1324,934 1366,993 1410,1032 1430,1033 1450,1015 1485,870 1500,818'].map(t=>pairs(t).map(([x,y])=>[240+x/.9924,1910+y/2.694]));
// each band runs 2px under the next one so that no seam shows
$('stream').innerHTML=['#fff0db','#fcd39f','#fcba88','#fa8c60','#e04b38','#b0030d'].map((c,i)=>`<path fill="${c}" d="${series(B[i])}${series(B[i+1].map(([x,y])=>[x,y+(i<5?2:0)]).reverse(),'L')}Z"/>`).join('');
$('streamaxis').innerHTML='<path class="ax" d="M301 2343H1750"/>'+hours.map(([x,n])=>`<path class="ax" d="M${x} 2343v17"/><text class="n2" x="${x}" y="2380">${n}</text>`).join('');

/* map: west (W) and east (E) sheets share one projection each */
const W=([x,y])=>[x*.5102-11,y*.4464-7], E=([x,y])=>[x*.523+749,y*.4464-7];
const iso=(c,m,list)=>$('isobars').insertAdjacentHTML('beforeend',list.map(t=>`<path stroke="${c}" d="${curve(pairs(t).map(m))}"/>`).join(''));
iso('#dfb596',W,['22,142 80,143 130,158 240,215 310,270 370,330 460,430 560,560 660,680 780,810 870,900 920,970 935,1080 940,1190 960,1270 1030,1400 1120,1556','22,297 100,282 200,305 270,340 400,465 520,600 640,720 760,860 840,950 880,1050 900,1180 930,1300 1000,1420 1080,1556','22,475 55,420 110,410 200,415 270,455 400,570 500,660 600,760 700,860 790,960 830,1060 830,1200 820,1290 840,1370 930,1510 975,1556','22,683 80,580 160,542 230,555 330,615 460,740 600,850 700,950 770,1030 790,1120 780,1220 720,1360 690,1450 667,1556','22,848 130,710 200,695 300,722 440,820 560,920 660,1010 720,1070 745,1140 735,1200 690,1290 650,1400 590,1475 530,1495 400,1470 320,1440 250,1432 170,1460 100,1510 22,1545','22,1025 120,885 200,850 270,850 350,890 480,980 600,1080 662,1150 655,1215 610,1330 560,1375 480,1368 380,1330 300,1290 240,1280 180,1300 90,1355 22,1376','210,1060 320,1062 410,1105 500,1155 545,1210 530,1245 490,1252 440,1225 380,1180 280,1135 230,1095 210,1060']);
iso('#dcd88f',W,['62,16 160,40 290,90 370,140 420,200 500,320 600,450 700,570 800,690 850,750 920,850 958,920 968,1020 968,1120 975,1220 1010,1300 1100,1420 1190,1556','457,16 510,110 600,240 680,340 760,470 860,620 920,720 1000,860 1008,930 1000,1040 985,1150 1010,1250 1100,1390 1215,1556']);
iso('#b6d590',W,['548,16 600,120 680,260 760,380 860,540 960,690 1040,820 1055,900 1045,1000 1020,1100 1015,1180 1050,1280 1140,1430 1240,1556','617,16 680,130 780,290 880,450 980,610 1080,770 1118,870 1110,930 1060,1010 1035,1100 1055,1200 1120,1310 1220,1440 1320,1556']);
iso('#a5d3b4',W,['680,16 760,150 880,340 1000,530 1100,690 1175,820 1182,900 1120,980 1075,1060 1080,1140 1150,1230 1260,1350 1440,1550']);
iso('#b3cdd0',W,['735,16 820,170 920,320 1040,500 1150,680 1240,830 1240,930 1190,990 1145,1070 1150,1150 1230,1220 1320,1290 1400,1400 1500,1450','780,16 870,170 980,330 1100,500 1220,690 1310,840 1318,920 1280,990 1250,1050 1260,1100 1320,1200 1400,1340 1480,1440 1568,1480','828,16 920,170 1030,330 1160,510 1290,700 1380,860 1430,940','883,16 960,160 1070,310 1200,480 1330,640 1480,790 1568,830','925,16 1010,170 1120,310 1250,470 1380,600 1440,680','965,16 1040,150 1160,300 1290,450 1420,560 1500,610','1003,16 1020,100 1100,200 1200,310 1330,430 1450,520 1490,545','1037,16 1090,120 1190,260 1330,390 1440,440 1490,462','1080,16 1130,110 1220,230 1310,340 1400,380 1490,390','1122,16 1190,130 1290,260 1380,300 1490,317','1165,16 1250,150 1350,220 1440,238 1490,238','1365,16 1400,80 1440,110 1490,115']);
iso('#b3cdd0',E,['0,115 60,100 120,85 150,16','0,238 66,234 150,205 215,150 230,100 240,16','0,317 130,315 210,290 285,240 305,160 322,16','0,390 120,400 200,398 270,370 340,300 370,210 390,16','0,462 120,475 260,475 340,430 400,340 435,200 458,16','0,545 120,555 245,556 350,500 430,400 480,260 530,16','20,620 100,645 240,635 360,590 450,490 520,350 570,180 607,16','20,715 100,725 260,712 390,680 470,610 540,500 600,340 660,170 703,16','20,810 80,832 200,832 330,815 430,790 500,720 600,560 700,400 800,220 828,120 828,16','0,985 60,1005 180,1020 390,1028 440,1000 560,880 660,760 720,640 780,460 860,320 925,200 930,120 917,16','0,1450 50,1435 100,1390 160,1372 240,1385 300,1390 360,1360 440,1325 530,1305 595,1275 680,1080 760,860 820,680 890,500 960,340 995,200 990,16','490,1470 620,1380 740,1310 820,1240 850,1160 848,920 870,760 960,500 1055,230 1057,16','10,1275 45,1285 55,1320 20,1350 0,1345 -22,1300 -10,1275 10,1268']);
iso('#a5d3b4',E,['520,1556 640,1470 760,1370 920,1275 935,1180 920,1000 915,830 960,620 1060,370 1120,200 1126,16']);
iso('#b6d590',E,['660,1556 800,1440 960,1350 1020,1290 1025,1200 1000,1060 978,880 985,780 1040,600 1120,400 1195,180 1197,16','755,1556 900,1420 1060,1320 1098,1250 1095,1170 1060,980 1045,800 1100,600 1180,420 1250,220 1285,16']);
iso('#dcd88f',E,['835,1556 950,1430 1100,1330 1155,1240 1155,1170 1120,960 1115,780 1160,600 1260,400 1340,200 1425,16','895,1556 920,1500 1080,1380 1200,1260 1235,1190 1200,1040 1180,900 1190,740 1270,540 1400,310 1534,92']);
iso('#dfc08c',E,['1534,310 1380,500 1300,640 1270,800 1262,920 1300,1010 1400,1120 1470,1190 1534,1240','1534,590 1440,690 1412,780 1412,880 1440,950 1490,980 1534,967','1240,1470 1280,1520 1310,1556','1005,1556 1010,1500']);
// rough outline: each segment is broken up with a repeatable wobble
let seed=7;const rnd=()=>(seed=(seed*16807)%2147483647)/2147483647-.5;
function rough(p,step,amp){let d='M'+p[0].map(f).join(' ');for(let i=1;i<p.length;i++){const a=p[i-1],b=p[i],n=Math.max(1,Math.round(Math.hypot(b[0]-a[0],b[1]-a[1])/step));for(let k=1;k<=n;k++){const t=k/n,j=k<n?amp:0;d+='L'+f(a[0]+(b[0]-a[0])*t+rnd()*j)+' '+f(a[1]+(b[1]-a[1])*t+rnd()*j)}}return d}
const add=(id,m,step,amp,list)=>$(id).insertAdjacentHTML('beforeend',list.map(t=>`<path d="${rough(pairs(t).map(m),step,amp)}"/>`).join(''));
add('coast',W,7,4,['580,16 550,95 515,110 570,100 600,180 605,240 640,290 665,350 685,420 735,425 752,460 735,500 705,530 715,555 735,575 700,600 610,605 540,615 510,620 490,645 455,650 415,662 440,620 470,575 520,570 548,540 500,553 470,538 430,525 440,505 480,470 480,425 455,430 465,385 530,385 535,320 510,340 510,270 520,240 440,245 440,200 500,140 540,130','330,210 275,230 275,290 205,305 215,340 200,365 245,400 225,440 205,470 195,495 200,530 225,548 280,525 320,495 370,485 388,415 380,320 415,290 400,240 370,215 350,215 330,210','1160,16 1150,50 1090,40 1060,60 1050,150 1065,230 1080,300 1085,345 1075,395 1060,350 1010,350 970,375 900,400 885,440 870,500 845,550 790,580 750,600 740,650 715,690 675,715 620,725 605,700 590,700 585,725 600,780 540,785 510,770 455,795 460,830 500,850 550,880 580,930 615,980 625,1030 615,1090 605,1170 585,1187 520,1185 430,1178 390,1170 330,1168 290,1165 245,1210 265,1270 265,1350 260,1420 235,1480 240,1520 262,1556','640,1556 670,1500 665,1450 690,1400 720,1350 760,1330 815,1290 818,1210 850,1180 900,1180 950,1205 975,1200 1010,1160 1040,1145 1075,1112 1110,1120 1140,1150 1160,1210 1220,1270 1280,1330 1330,1360 1370,1400 1410,1440 1420,1500 1405,1556','1300,1015 1265,1020 1250,1060 1245,1110 1270,1150 1300,1180 1320,1230 1350,1280 1415,1295 1430,1330 1500,1375 1525,1410 1460,1395 1440,1440 1465,1490 1430,1556','1300,1015 1310,1050 1345,1060 1365,1110 1400,1160 1460,1200 1510,1250','1345,1050 1365,1075 1385,1155 1360,1110 1345,1050','1420,1190 1490,1235 1450,1225 1420,1190','1108,1220 1075,1250 1070,1280 1095,1325 1112,1290 1108,1220','1050,1365 1115,1345 1122,1390 1110,1480 1080,1500 1062,1470 1050,1365','790,1445 820,1430 825,1455 810,1470 790,1445','1110,230 1125,190 1170,190 1170,230 1140,240 1110,230','1175,225 1220,200 1230,260 1190,262 1175,225','1110,350 1090,300 1110,240 1140,290 1190,325 1240,290 1290,290 1305,320 1340,330 1400,300 1480,265 1530,255','1185,16 1265,100 1265,190 1330,195 1340,130 1420,120 1450,16','380,30 405,45 390,65 365,40 380,30','360,95 400,70 435,65 410,100 360,95','320,40 330,48 322,52','455,295 465,310 450,315 455,295','895,405 940,380 1000,362']);
add('coast',E,7,4,['0,252 30,250 45,285 75,300 115,270 150,240 155,130 165,100 160,16','20,16 30,50 45,16','600,945 545,1020 540,1080 500,1130 495,1190 462,1200 455,1250 475,1310 520,1345 620,1350 680,1300 790,1285 840,1325 950,1358 1050,1345 1090,1290 1080,1240 1020,1180 940,1100 870,1055 900,1030 930,960 920,940 975,905 890,915 800,950 780,990 800,1040 850,1040 850,1058 800,1065 740,1108 720,1060 685,1030 720,990 650,970 640,940 600,945','1534,905 1490,915 1450,975 1360,1025 1320,1095 1355,1150 1360,1220 1400,1320 1450,1370 1480,1405 1420,1420 1420,1556','1534,1060 1520,1090 1485,1100 1510,1150 1534,1200','0,1240 40,1270 85,1310 80,1380 100,1450 130,1470 180,1540 220,1556','520,1350 440,1360 400,1410 340,1370 280,1370 230,1400 240,1440 300,1470 300,1540','520,1350 550,1375 420,1400','310,1500 340,1530 300,1550']);
add('border',W,5,6,['790,580 800,610 850,650 870,690 920,710 970,720 1000,745 1050,760 1025,865 1000,875 950,975 985,960 1000,1000 990,1100 1025,1135 1010,1160','845,555 920,555 945,610 965,650 970,720','945,600 950,520 990,480 1000,380','1340,330 1350,420 1355,500 1370,570 1300,600 1240,640 1260,730 1310,760 1300,800 1265,830 1280,870 1200,880 1150,890 1120,870 1025,865','1110,915 1150,920 1240,905 1240,935 1330,960 1420,935 1450,850 1460,780 1380,760 1330,785','1000,1000 1050,960 1100,1000 1110,915','1460,780 1530,690','1305,960 1310,1020 1390,1020 1420,935','1400,1060 1500,1060 1568,1060','1400,1060 1440,1140 1500,1220','590,1188 640,1215 740,1240 815,1258','265,1280 300,1290 370,1290 380,1320 350,1380 350,1450 330,1520 345,1556','275,290 320,320 370,290 400,320','1080,250 1120,250']);
add('border',E,5,6,['455,16 475,110 590,160 600,240 640,310 680,380 620,405 640,480 720,475 750,530 820,640 900,640 1020,710 1010,840 940,890','580,560 500,540 430,530 380,515 300,520 270,500 285,440 265,330 235,290 100,290','150,130 270,100 410,160 370,300 270,330','160,225 230,240 235,290','270,500 295,610 230,720 235,745 200,720 120,700','640,480 600,490 580,560','205,800 240,835 330,850 410,805 470,800 525,860 560,960 520,950 480,1030 500,1045 545,1030','410,805 460,890 480,1020','0,850 50,850 90,800 205,800 230,740','240,835 180,890 160,970 60,1000 80,1060 70,1130 85,1200 60,1230','160,970 180,1070 225,1110 240,1150 310,1165 430,1130 495,1160','225,1120 240,1200 210,1260 240,1330 380,1325 400,1290 460,1285','85,1210 150,1200 210,1270 140,1275 130,1340 150,1370','1020,1175 1130,1195 1230,1230 1340,1300 1380,1340','1090,1325 1180,1340 1250,1400 1330,1320','1534,545 1500,530 1440,560 1405,620 1410,680 1355,640 1320,700 1310,800 1340,855 1390,890 1415,940 1440,970','240,1330 250,1390']);
$('pills').innerHTML=[[93,182,56,15,'#f7cfd0','1026'],[117,305,56,15,'#f5c9dc','1030'],[170,472,56,15,'#f5c9dc','1034'],[804,93,42,-10,'#d5f0ee','990'],[852,171,42,-5,'#d5f0ee','994'],[876,241,42,0,'#cbe8f3','998'],[736,301,56,20,'#c0dcf5','1002'],[736,426,56,20,'#c0dcf5','1006'],[781,675,56,-5,'#bfdff2','1010'],[1374,617,56,0,'#f3e1bd','1022'],[-6,55,20,0,'#f3e1bd','']].map(([x,y,w,r,c,n])=>`<g transform="translate(${x} ${y}) rotate(${r})"><rect x="${-w/2}" y="-11" width="${w}" height="22" rx="10" fill="${c}"/><text y="6">${n}</text></g>`).join('');
</script>
</body>
</html>
